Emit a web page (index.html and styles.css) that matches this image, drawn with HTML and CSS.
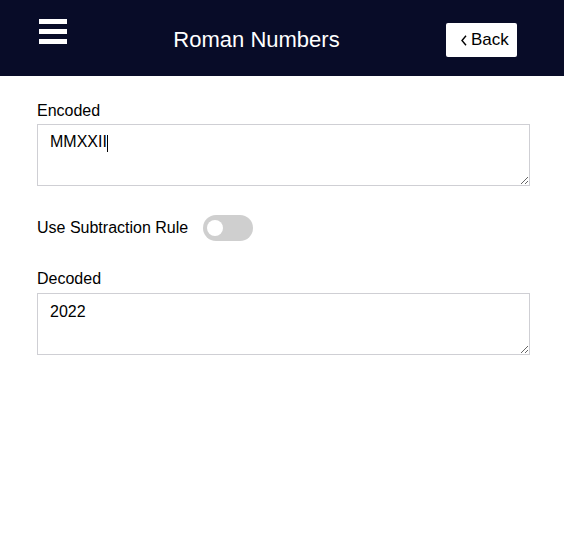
FILE: index.html
```html
<!DOCTYPE html>
<html lang="en">
<head>
<meta charset="utf-8">
<title>Roman Numbers</title>
<link rel="stylesheet" href="styles.css">
</head>
<body>
<header class="topbar">
  <div class="menu" aria-label="Menu">
    <span class="menu-bar"></span>
    <span class="menu-bar"></span>
    <span class="menu-bar"></span>
  </div>
  <h1 class="title">Roman Numbers</h1>
  <button class="back-btn" type="button">
    <svg class="chev" width="6" height="11" viewBox="0 0 6 11"><path d="M5 0.8 L1 5.5 L5 10.2" fill="none" stroke="#000" stroke-width="1.4"/></svg>
    <span>Back</span>
  </button>
</header>
<main class="content">
  <div class="field">
    <label class="field-label" for="enc">Encoded</label>
    <div class="input-wrap">
      <textarea id="enc" class="field-input">MMXXII</textarea>
      <span class="caret"></span>
    </div>
  </div>
  <div class="toggle-row">
    <span class="toggle-label">Use Subtraction Rule</span>
    <span class="toggle"><span class="knob"></span></span>
  </div>
  <div class="field field-decoded">
    <label class="field-label" for="dec">Decoded</label>
    <div class="input-wrap">
      <textarea id="dec" class="field-input">2022</textarea>
    </div>
  </div>
</main>
</body>
</html>
```
FILE: styles.css
```css
* { box-sizing: border-box; }
html, body { margin: 0; padding: 0; background: #fff; }
body {
  font-family: "Liberation Sans", Arial, Helvetica, sans-serif;
  color: #000;
}
.topbar {
  height: 76px;
  background: #080c28;
  display: flex;
  align-items: center;
  justify-content: space-between;
  padding: 4px 47px 0 39px;
}
.menu {
  align-self: flex-start;
  margin-top: 15px;
  width: 28px;
  display: flex;
  flex-direction: column;
  gap: 5px;
}
.menu-bar {
  display: block;
  height: 5px;
  background: #fff;
}
.title {
  margin: 0;
  font-size: 22px;
  font-weight: normal;
  color: #fff;
  line-height: 26px;
}
.back-btn {
  width: 71px;
  height: 34px;
  background: #fff;
  border: none;
  border-radius: 2px;
  display: flex;
  align-items: center;
  padding: 0 0 0 15px;
  gap: 4px;
  font-family: inherit;
  font-size: 17px;
  color: #000;
}
.chev { display: block; margin-top: 1px; }
.content {
  padding: 26px 34px 0 37px;
}
.field-label {
  display: block;
  font-size: 16px;
  line-height: 18px;
  margin-bottom: 4px;
}
.field-decoded .field-label { margin-bottom: 5px; }
.input-wrap { position: relative; }
.field-input {
  display: block;
  width: 100%;
  height: 62px;
  border: 1px solid #cfcfd4;
  border-radius: 0;
  padding: 8px 12px;
  font-family: inherit;
  font-size: 16px;
  color: #000;
  background: #fff;
  margin: 0;
}
.field-decoded .field-input { padding-top: 9px; }
.caret {
  position: absolute;
  left: 70px;
  top: 11px;
  width: 1px;
  height: 17px;
  background: #000;
}
.toggle-row {
  display: flex;
  align-items: center;
  gap: 15px;
  margin-top: 29px;
  height: 26px;
}
.toggle-label {
  font-size: 16px;
}
.toggle {
  position: relative;
  width: 50px;
  height: 26px;
  border-radius: 13px;
  background: #cfcfcf;
}
.knob {
  position: absolute;
  left: 4px;
  top: 5px;
  width: 16px;
  height: 16px;
  border-radius: 50%;
  background: #fff;
}
.field-decoded { margin-top: 29px; }
```
